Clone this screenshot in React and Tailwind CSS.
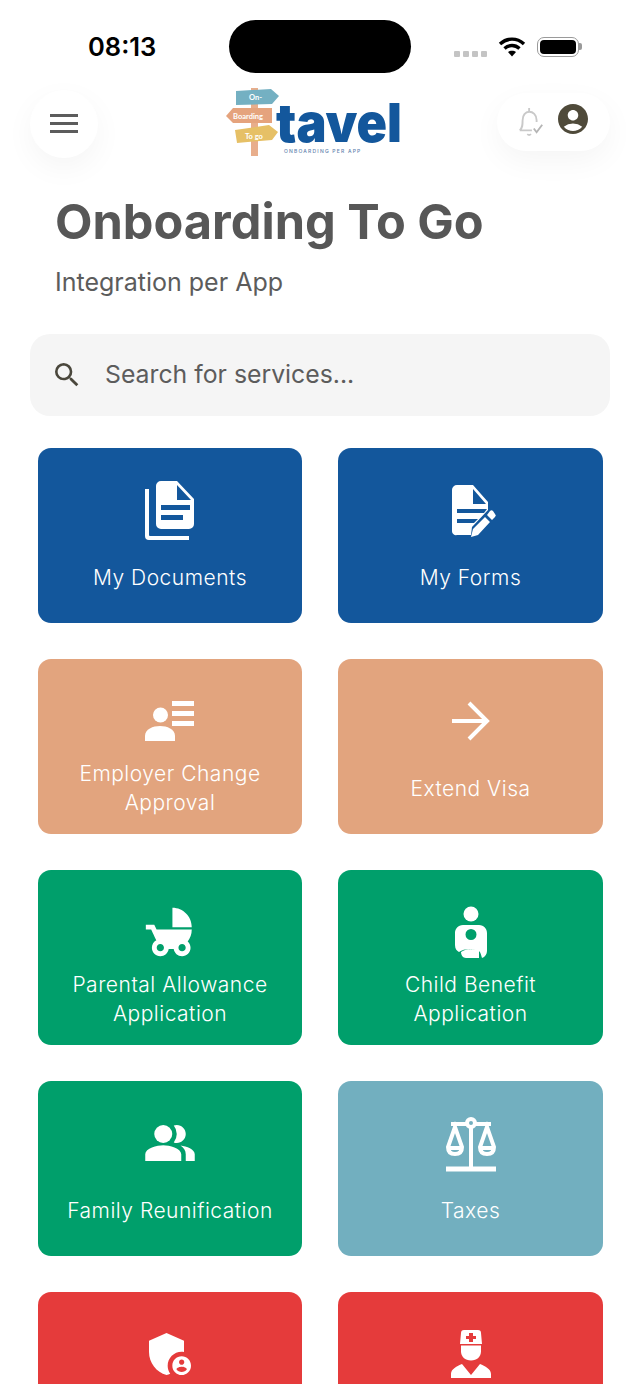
import React from 'react';
import { MdChildFriendly, MdPeopleAlt, MdAdminPanelSettings, MdAccountCircle, MdSearch } from 'react-icons/md';

const DocumentsIcon = () => (
  <svg viewBox="0 0 60 60" className="w-[60px] h-[60px]" fill="white">
    <path fillRule="evenodd" d="M21 1h16l17 18v25a5 5 0 0 1-5 5H21a5 5 0 0 1-5-5V6a5 5 0 0 1 5-5zM37 5v15h14zM21 25v5h29v-5zM21 35v5h22v-5z" />
    <path d="M5 9h4v46a1 1 0 0 0 1 1h39v4H9a4 4 0 0 1-4-4z" />
  </svg>
);

const FormsIcon = () => (
  <svg viewBox="0 0 60 60" className="w-[60px] h-[60px]" fill="white">
    <path fillRule="evenodd" d="M16 5h16l15 17v8L31 47l-1 8H16a4 4 0 0 1-5-4V10a5 5 0 0 1 5-5zM32 9v15h13zM16 29v4h27l3-4zM16 39v4h17l4-4z" />
    <path d="M49 31a2 2 0 0 1 3 0l2 3a2 2 0 0 1 0 3l-3 3-5-5zM44 37l5 5-12 13-7 2 2-8z" />
  </svg>
);

const PersonListIcon = () => (
  <svg viewBox="0 0 60 60" className="w-[60px] h-[60px]" fill="white">
    <circle cx="20.500" cy="24" r="7.500" />
    <path d="M5 50v-5c0-7 8-10 15-10s15 3 15 10v5z" />
    <rect x="32" y="10" width="22" height="5" />
    <rect x="32" y="20" width="22" height="5" />
    <rect x="32" y="30" width="22" height="5" />
  </svg>
);

const ArrowIcon = () => (
  <svg viewBox="0 0 60 60" className="w-[60px] h-[60px]" fill="none" stroke="white" strokeWidth="4">
    <path d="M11 30h35M28 12l18 18-18 18" />
  </svg>
);

const ChildIcon = () => (
  <svg viewBox="0 0 60 60" className="w-[60px] h-[60px]" fill="white">
    <circle cx="30" cy="12" r="7.500" />
    <path fillRule="evenodd" d="M22 23h16c5 0 8 4 8 8v18c0 3-2 6-5 7-1-3-1-5-3-7-2-1-5-2-9-2-5 0-8 1-11 3-2-1-4-3-4-7V31c0-4 3-8 8-8zM30 27a5.500 5.500 0 1 0 0 11 5.500 5.500 0 0 0 0-11zM20 50c3-2 6-3 10-3 3 0 6 1 8 2v7H25c-3 0-5-3-5-6z" />
  </svg>
);

const ScaleIcon = () => (
  <svg viewBox="0 0 60 60" className="w-[60px] h-[60px]" fill="none" stroke="white" strokeWidth="4">
    <circle cx="30" cy="10" r="4" />
    <path d="M10 11h16M34 11h16M30 14v40" />
    <path strokeWidth="5" d="M5 56h50" />
    <path d="M14 14L7 34c0 5 3 7 7 7s7-2 7-7zM46 14l-7 20c0 5 3 7 7 7s7-2 7-7z" />
    <path d="M7 35h14M39 35h14" />
  </svg>
);

const DoctorIcon = () => (
  <svg viewBox="0 0 60 60" className="w-[60px] h-[60px]" fill="white">
    <path fillRule="evenodd" d="M20 9c0-2 1-3 3-3h14c2 0 3 1 3 3l1 11H19zM28 9v3h-3v3h3v3h4v-3h3v-3h-3V9z" />
    <path d="M20 21.500h20v6c0 5-4 9-10 9s-10-4-10-9z" />
    <path d="M10 54v-4c0-5 6-8 11-10l9 11 9-11c5 2 11 5 11 10v4z" />
  </svg>
);

const tiles = [
  { label: 'My Documents', bg: 'bg-[#13579c]', icon: <DocumentsIcon /> },
  { label: 'My Forms', bg: 'bg-[#13579c]', icon: <FormsIcon /> },
  { label: <>Employer Change<br />Approval</>, bg: 'bg-[#e2a47e]', icon: <PersonListIcon /> },
  { label: 'Extend Visa', bg: 'bg-[#e2a47e]', icon: <ArrowIcon /> },
  { label: <>Parental Allowance<br />Application</>, bg: 'bg-[#009f6b]', icon: <MdChildFriendly size={58} color="white" /> },
  { label: <>Child Benefit<br />Application</>, bg: 'bg-[#009f6b]', icon: <ChildIcon /> },
  { label: 'Family Reunification', bg: 'bg-[#009f6b]', icon: <MdPeopleAlt size={54} color="white" /> },
  { label: 'Taxes', bg: 'bg-[#72afbf]', icon: <ScaleIcon /> },
  { bg: 'bg-[#e53b3b]', icon: <MdAdminPanelSettings size={56} color="white" /> },
  { bg: 'bg-[#e53b3b]', icon: <DoctorIcon /> },
];

const Logo = () => (
  <svg viewBox="224 86 180 72" className="w-[180px] h-[72px]">
    <rect x="252" y="88" width="7" height="68" fill="#e8ae8c" />
    <path d="M237 91l35-2 8 7-7 8-36 1z" fill="#74b0c2" />
    <path d="M234 108h39v15h-39l-7-7z" fill="#e5a37d" />
    <path d="M236 130l34-5 9 7-6 8-35 3z" fill="#e6c066" />
    <text x="250" y="100" fontFamily="Lato, sans-serif" fontSize="7.500" fontWeight="700" fill="white">On-</text>
    <text x="234" y="119" fontFamily="Lato, sans-serif" fontSize="7.500" fontWeight="700" fill="white">Boarding</text>
    <text x="246" y="139" fontFamily="Lato, sans-serif" fontSize="7.500" fontWeight="700" fill="white">To go</text>
    <text x="277" y="142" fontFamily="Inter, sans-serif" fontSize="54" fontWeight="900" fill="#13579c" textLength="126" lengthAdjust="spacingAndGlyphs">tavel</text>
    <text x="285" y="153" fontFamily="Inter, sans-serif" fontSize="5" fontWeight="500" fill="#5f83ad" letterSpacing="1.200">ONBOARDING PER APP</text>
  </svg>
);

const App = () => {
  return (
    <div className="w-[640px] h-[1384px] overflow-hidden bg-white font-['Inter',sans-serif]">
      {/* status bar */}
      <div className="h-[80px] flex pt-[20px] pl-[88px]">
        <div className="w-[141px] h-[53px] flex items-center pt-[1px] text-[25.500px] font-semibold text-black">08:13</div>
        <div className="w-[182px] h-[53px] rounded-[27px] bg-black" />
        <div className="h-[53px] flex items-center pl-[43px]">
          <div className="flex gap-[3px] mt-[14px]">
            <span className="w-[6px] h-[6px] rounded-[1px] bg-[#c4c4c4]" />
            <span className="w-[6px] h-[6px] rounded-[1px] bg-[#c4c4c4]" />
            <span className="w-[6px] h-[6px] rounded-[1px] bg-[#c4c4c4]" />
            <span className="w-[6px] h-[6px] rounded-[1px] bg-[#c4c4c4]" />
          </div>
          <svg viewBox="0 0 28 20" className="w-[28px] h-[20px] ml-[11px]" fill="none" stroke="black" strokeWidth="3.400">
            <path d="M2 7c7-6.500 17-6.500 24 0M6.500 11.500c4.500-4 10.500-4 15 0" />
            <path d="M14 19.500l-4-4.500c2-1.800 6-1.800 8 0z" fill="black" stroke="none" />
          </svg>
          <div className="flex items-center ml-[11px]">
            <div className="w-[42px] h-[20px] rounded-[7px] border-[1.500px] border-[#9a9a9a] p-[2px]">
              <div className="w-full h-full rounded-[4px] bg-black" />
            </div>
            <div className="w-[3px] h-[7px] rounded-r-[2px] bg-[#9a9a9a]" />
          </div>
        </div>
      </div>

      {/* header */}
      <div className="h-[88px] flex items-center justify-between px-[30px]">
        <div className="w-[68px] h-[68px] rounded-full bg-white shadow-[0_10px_30px_rgba(0,0,0,0.045)] flex items-center justify-center">
          <svg viewBox="0 0 28 20" className="w-[28px] h-[20px]" fill="#5c5c5c">
            <rect y="0" width="28" height="3" />
            <rect y="8" width="28" height="3" />
            <rect y="16" width="28" height="3" />
          </svg>
        </div>
        <div className="ml-[30px] mt-[-4px]"><Logo /></div>
        <div className="w-[113px] h-[58px] rounded-[29px] bg-white shadow-[0_10px_30px_rgba(0,0,0,0.045)] flex items-center gap-[10px] pl-[20px] mb-[4px]">
          <svg viewBox="0 0 30 34" className="w-[28px] h-[32px]" fill="none" stroke="#c9c9c9" strokeWidth="2">
            <path d="M3 26c3-3 3-6 3-11 0-5 3-9 7-9s8 3 8 9v2M3 26h13M11 30a3 3 0 0 0 4 0M13 2v4" />
            <path d="M18 24l3 4 6-8" stroke="#b5b5b5" />
          </svg>
          <MdAccountCircle size={36} color="#4f4a3a" className="mt-[-6px]" />
        </div>
      </div>

      {/* title */}
      <div className="pl-[55px] pt-[26px]">
        <h1 className="text-[48.700px] leading-[56px] font-bold text-[#575757]">Onboarding To Go</h1>
        <p className="mt-[16px] text-[25px] leading-[32px] text-[#5c5c5c]">Integration per App</p>
      </div>

      {/* search */}
      <div className="mx-[30px] mt-[36px] h-[82px] rounded-[20px] bg-[#f5f5f5] flex items-center pl-[21px] gap-[22px]">
        <MdSearch size={32} color="#4a473c" />
        <span className="text-[24.800px] text-[#5c5c5c]">Search for services...</span>
      </div>

      {/* tiles */}
      <div className="grid grid-cols-[264px_265px] gap-[36px] pl-[38px] mt-[32px]">
        {tiles.map((tile, i) => (
          <div key={i} className={`${tile.bg} h-[175px] rounded-[13px] pt-[32px] flex flex-col items-center text-white`}>
            <div className="h-[60px] flex items-center justify-center">{tile.icon}</div>
            {tile.label && (
              <div className="h-[74px] flex items-center text-center text-[21px] leading-[29px] font-light tracking-[0.5px]">
                <span>{tile.label}</span>
              </div>
            )}
          </div>
        ))}
      </div>
    </div>
  );
};

export default App;
